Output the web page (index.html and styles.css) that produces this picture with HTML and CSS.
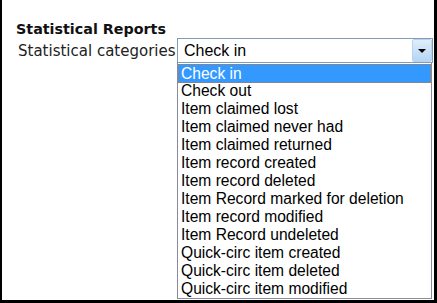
FILE: index.html
```html
<!DOCTYPE html>
<html lang="en">
  <head>
    <meta charset="UTF-8" />
    <title>Statistical Reports</title>
    <link rel="stylesheet" href="styles.css">
  </head>
  <body>
    <div class="frame">
      <h2 class="title">Statistical Reports</h2>
      <div class="field">
        <label class="field-label">Statistical categories</label>
        <div class="combo">
          <div class="combo-box">
            <span class="combo-value">Check in</span>
            <span class="combo-btn"><span class="arrow"></span></span>
          </div>
          <ul class="combo-list">
            <li class="selected">Check in</li>
            <li>Check out</li>
            <li>Item claimed lost</li>
            <li>Item claimed never had</li>
            <li>Item claimed returned</li>
            <li>Item record created</li>
            <li>Item record deleted</li>
            <li>Item Record marked for deletion</li>
            <li>Item record modified</li>
            <li>Item Record undeleted</li>
            <li>Quick-circ item created</li>
            <li>Quick-circ item deleted</li>
            <li>Quick-circ item modified</li>
          </ul>
        </div>
      </div>
    </div>
  </body>
</html>
```

FILE: styles.css
```css
* {
  margin: 0;
  padding: 0;
  box-sizing: border-box;
}

body {
  background-color: white;
  font-family: "DejaVu Sans", Verdana, sans-serif;
}

.frame {
  width: 437px;
  height: 303px;
  border-left: 2px solid black;
  border-right: 3px solid black;
  border-bottom: 3px solid black;
  padding: 21px 0 0 14px;
  overflow: hidden;
}

.title {
  font-size: 14.3px;
  font-weight: bold;
  color: #111;
  line-height: 16px;
}

.field {
  display: flex;
  align-items: flex-start;
  margin-top: 1px;
  margin-left: 2px;
}

.field-label {
  font-size: 15px;
  color: #222;
  line-height: 26px;
  width: 159px;
}

.combo {
  position: relative;
  width: 256px;
}

.combo-box {
  display: flex;
  align-items: center;
  height: 25px;
  border: 1px solid #7f9db9;
  background-color: white;
  font-family: "Liberation Sans", Arial, sans-serif;
  font-size: 16px;
}

.combo-value {
  flex: 1;
  padding-left: 6px;
}

.combo-btn {
  display: flex;
  align-items: center;
  justify-content: center;
  width: 20px;
  height: 23px;
  border: 1px solid #b9d3ee;
  border-radius: 2px;
  background: linear-gradient(#e2eefa, #b3d5f5);
}

.arrow {
  width: 0;
  height: 0;
  border-left: 4px solid transparent;
  border-right: 4px solid transparent;
  border-top: 4px solid black;
}

.combo-list {
  position: absolute;
  top: 25px;
  left: 0;
  width: 255px;
  list-style: none;
  background-color: white;
  border: 1px solid #8a8a9e;
  border-top: none;
  padding-top: 1px;
  font-family: "Liberation Sans", Arial, sans-serif;
  font-size: 15.6px;
  color: black;
}

.combo-list li {
  height: 18px;
  line-height: 18px;
  padding-left: 3px;
  white-space: nowrap;
}

.combo-list li.selected {
  height: 19px;
  line-height: 19px;
  margin-bottom: -1px;
  background-color: #3399ff;
  color: white;
  outline: 1px dotted #c8742e;
  outline-offset: -1px;
}
```
